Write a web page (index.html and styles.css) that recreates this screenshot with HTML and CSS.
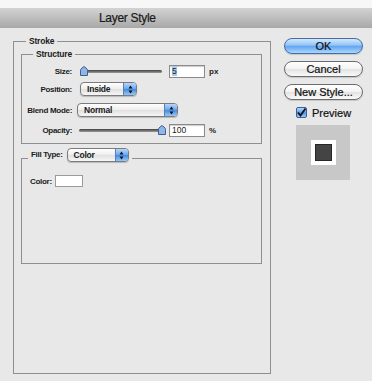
FILE: index.html
```html
<!DOCTYPE html>
<html lang="en">
<head>
    <meta charset="UTF-8">
    <meta name="viewport" content="width=device-width, initial-scale=1.0">
    <title>Layer Style</title>
    <link rel="stylesheet" href="styles.css">
</head>
<body>
    <div class="desk"></div>
    <div class="titlebar">Layer Style</div>

    <div class="dialog">
        <fieldset class="group stroke">
            <legend>Stroke</legend>

            <fieldset class="group structure">
                <legend>Structure</legend>

                <div class="row row-size">
                    <span class="label">Size:</span>
                    <div class="slider">
                        <span class="track"></span>
                        <!-- thumb offset comes from the value (5 of 250) -->
                        <svg class="thumb" style="left: 0px" width="8" height="10" viewBox="0 0 8 10">
                            <path d="M0.5 9.5 L0.5 4.5 Q0.5 3 2 2 L4 0.5 L6 2 Q7.5 3 7.5 4.5 L7.5 9.5 Z" fill="#8fb6e6" stroke="#3f5f8f"/>
                        </svg>
                    </div>
                    <span class="field"><span class="sel">5</span></span>
                    <span class="unit">px</span>
                </div>

                <div class="row row-position">
                    <span class="label">Position:</span>
                    <div class="popup popup-position">
                        <span class="text">Inside</span>
                        <span class="arrows">
                            <svg width="5" height="9" viewBox="0 0 5 9"><path d="M0.5 3.5 L2.5 0.5 L4.5 3.5 Z M0.5 5.5 L2.5 8.5 L4.5 5.5 Z" fill="#111"/></svg>
                        </span>
                    </div>
                </div>

                <div class="row row-blend">
                    <span class="label">Blend Mode:</span>
                    <div class="popup popup-blend">
                        <span class="text">Normal</span>
                        <span class="arrows">
                            <svg width="5" height="9" viewBox="0 0 5 9"><path d="M0.5 3.5 L2.5 0.5 L4.5 3.5 Z M0.5 5.5 L2.5 8.5 L4.5 5.5 Z" fill="#111"/></svg>
                        </span>
                    </div>
                </div>

                <div class="row row-opacity">
                    <span class="label">Opacity:</span>
                    <div class="slider slider-opacity">
                        <span class="track"></span>
                        <svg class="thumb" style="left: 79px" width="8" height="10" viewBox="0 0 8 10">
                            <path d="M0.5 9.5 L0.5 4.5 Q0.5 3 2 2 L4 0.5 L6 2 Q7.5 3 7.5 4.5 L7.5 9.5 Z" fill="#8fb6e6" stroke="#3f5f8f"/>
                        </svg>
                    </div>
                    <span class="field">100</span>
                    <span class="unit">%</span>
                </div>
            </fieldset>

            <fieldset class="group fill">
                <legend>
                    <span class="legend-label">Fill Type:</span>
                    <span class="popup popup-fill">
                        <span class="text">Color</span>
                        <span class="arrows">
                            <svg width="5" height="9" viewBox="0 0 5 9"><path d="M0.5 3.5 L2.5 0.5 L4.5 3.5 Z M0.5 5.5 L2.5 8.5 L4.5 5.5 Z" fill="#111"/></svg>
                        </span>
                    </span>
                </legend>
                <div class="color-row">
                    <span class="color-label">Color:</span>
                    <span class="swatch"></span>
                </div>
            </fieldset>
        </fieldset>

        <div class="buttons">
            <button class="btn btn-default">OK</button>
            <button class="btn">Cancel</button>
            <button class="btn">New Style...</button>
            <label class="preview-check">
                <span class="checkbox">
                    <svg width="11" height="11" viewBox="0 0 11 11"><path d="M2 5.5 L4.5 8.5 L9.5 1.5" fill="none" stroke="#111" stroke-width="1.8"/></svg>
                </span>
                Preview
            </label>
            <div class="preview-box">
                <div class="preview-white">
                    <div class="preview-dark"></div>
                </div>
            </div>
        </div>
    </div>
</body>
</html>
```

FILE: styles.css
```css
body {
    margin: 0;
    background: #e8e8e8;
    font-family: "Liberation Sans", Arial, sans-serif;
    color: #1b1b1b;
}
.desk {
    height: 8px;
    background: #f7f7f7;
}
.titlebar {
    height: 20px;
    line-height: 20px;
    padding-left: 99px;
    background: linear-gradient(#d3d3d3, #a8a8a8);
    font-size: 12px;
    letter-spacing: -0.3px;
    color: #1a1a1a;
    -webkit-text-stroke: 0.2px #1a1a1a;
}
.dialog {
    display: flex;
    align-items: flex-start;
}
.group {
    border: 1px solid #8f8f8f;
    margin: 0;
    padding: 0;
    min-width: 0;
    box-sizing: border-box;
}
.group legend {
    font-size: 8.5px;
    font-weight: bold;
    line-height: 10px;
    padding: 0 3px;
    letter-spacing: -0.2px;
}
.stroke {
    margin: 8px 0 0 13px;
    width: 258px;
    height: 338px;
    padding: 3px 8px 0 7px;
}
.stroke > legend {
    margin-left: 5px;
}
.structure {
    width: 241px;
    padding: 3px 0 5px 0;
}
.structure > legend {
    margin-left: 11px;
}
.row {
    display: flex;
    align-items: center;
    height: 18px;
}
.row-blend {
    height: 24px;
}
.row-opacity {
    height: 16px;
}
.label {
    width: 50px;
    flex-shrink: 0;
    margin-right: 8px;
    text-align: right;
    font-size: 8px;
    font-weight: bold;
    letter-spacing: -0.3px;
}
.slider {
    position: relative;
    width: 82px;
    height: 10px;
    display: flex;
    align-items: center;
}
.slider-opacity {
    width: 83px;
    margin-left: -1px;
}
.track {
    flex: 1;
    height: 3px;
    border-radius: 2px;
    background: linear-gradient(#3f3f3f, #9c9c9c);
}
.thumb {
    position: absolute;
    top: 0;
}
.field {
    width: 36px;
    height: 13px;
    box-sizing: border-box;
    margin-left: 7px;
    padding-left: 2px;
    border: 1px solid #8a8a8a;
    background: #fff;
    box-shadow: inset 0 1px 1px rgba(0, 0, 0, 0.2);
    font-size: 8.5px;
    line-height: 11px;
    color: #222;
}
.sel {
    background: #a8c8ef;
}
.unit {
    margin-left: 4px;
    font-size: 8px;
    font-weight: bold;
}
.popup {
    display: flex;
    height: 14px;
    box-sizing: border-box;
    border: 1px solid #7b7b7b;
    border-radius: 4px;
    overflow: hidden;
    background: linear-gradient(#ffffff, #ededed 50%, #e0e0e0 51%, #f6f6f6);
    box-shadow: 0 1px 1px rgba(0, 0, 0, 0.2);
    font-size: 8.5px;
    font-weight: bold;
    letter-spacing: -0.2px;
}
.popup .text {
    flex: 1;
    padding-left: 6px;
    line-height: 12px;
}
.popup .arrows {
    width: 12px;
    display: flex;
    align-items: center;
    justify-content: center;
    border-left: 1px solid #5a7fb5;
    background: linear-gradient(#b6d6fa, #6aa6ec 50%, #4288e2 51%, #93c8fa);
}
.popup-position {
    width: 57px;
}
.popup-blend {
    width: 101px;
    margin-left: -3px;
}
.popup-fill {
    width: 62px;
    margin-left: 4px;
}
.fill {
    width: 241px;
    height: 116px;
    margin-top: 4px;
}
.fill > legend {
    display: flex;
    align-items: center;
    margin-left: 6px;
    padding: 0 3px 6px;
    line-height: 14px;
}
.legend-label {
    font-size: 8px;
    letter-spacing: -0.3px;
}
.color-row {
    display: flex;
    align-items: center;
    height: 12px;
    padding: 7px 0 0 8px;
}
.color-label {
    font-size: 8px;
    font-weight: bold;
    letter-spacing: -0.3px;
}
.swatch {
    width: 28px;
    height: 12px;
    box-sizing: border-box;
    margin-left: 3px;
    border: 1px solid #9a9a9a;
    background: #fff;
}
.buttons {
    margin: 10px 0 0 13px;
    width: 79px;
    display: flex;
    flex-direction: column;
    gap: 7px;
}
.btn {
    height: 16px;
    box-sizing: border-box;
    padding: 0;
    border: 1px solid #6b6b6b;
    border-radius: 8px;
    background: linear-gradient(#ffffff, #f3f3f3 50%, #e2e2e2 51%, #fafafa);
    font-family: "Liberation Sans", Arial, sans-serif;
    font-size: 11px;
    line-height: 14px;
    color: #111;
    -webkit-text-stroke: 0.2px #111;
    box-shadow: 0 1px 1px rgba(0, 0, 0, 0.15);
}
.btn-default {
    border-color: #4a6aa3;
    background: linear-gradient(#d2e8fd, #92c4f6 45%, #5fa3ee 50%, #a9d8ff);
}
.preview-check {
    display: flex;
    align-items: center;
    height: 11px;
    margin-left: 12px;
    font-size: 11px;
    color: #111;
    -webkit-text-stroke: 0.2px #111;
}
.checkbox {
    width: 11px;
    height: 11px;
    box-sizing: border-box;
    margin-right: 5px;
    border: 1px solid #3c5e97;
    border-radius: 2px;
    background: linear-gradient(#b9d8fa, #5f9ee9 50%, #4a8ee6 51%, #9ccbf8);
    display: flex;
}
.checkbox svg {
    margin: -1px;
}
.preview-box {
    width: 54px;
    height: 55px;
    margin-left: 12px;
    background: #c8c8c8;
    display: flex;
    align-items: center;
    justify-content: center;
}
.preview-white {
    width: 25px;
    height: 25px;
    background: #fff;
    display: flex;
    align-items: center;
    justify-content: center;
}
.preview-dark {
    width: 17px;
    height: 17px;
    box-sizing: border-box;
    border: 1px solid #262626;
    background: #444;
}
```
